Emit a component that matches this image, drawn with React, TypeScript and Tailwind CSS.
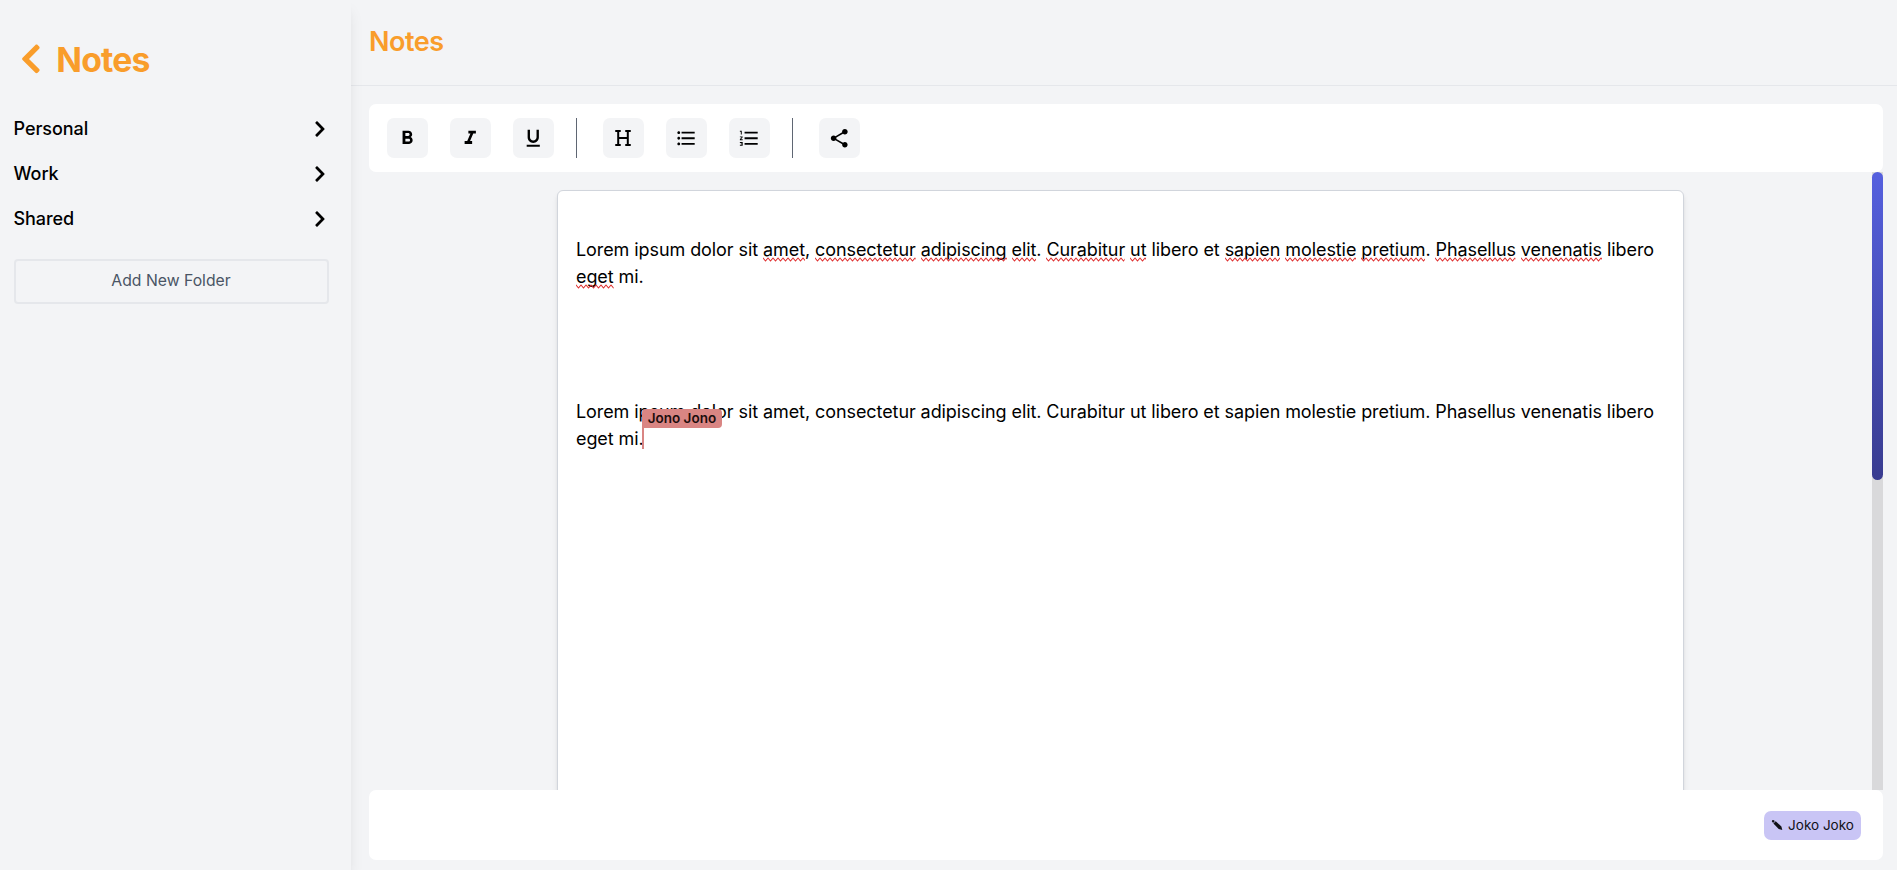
import type { ReactNode } from "react";
import { FaChevronLeft, FaChevronRight } from "react-icons/fa";
import {
  MdFormatBold,
  MdFormatItalic,
  MdFormatListBulleted,
  MdFormatListNumbered,
  MdFormatUnderlined,
  MdShare,
} from "react-icons/md";

const folders = ["Personal", "Work", "Shared"];

const sentence: { text: string; flagged?: boolean }[] = [
  { text: "Lorem ipsum dolor sit " },
  { text: "amet", flagged: true },
  { text: ", " },
  { text: "consectetur", flagged: true },
  { text: " " },
  { text: "adipiscing", flagged: true },
  { text: " " },
  { text: "elit", flagged: true },
  { text: ". " },
  { text: "Curabitur", flagged: true },
  { text: " " },
  { text: "ut", flagged: true },
  { text: " libero et " },
  { text: "sapien", flagged: true },
  { text: " " },
  { text: "molestie", flagged: true },
  { text: " " },
  { text: "pretium", flagged: true },
  { text: ". " },
  { text: "Phasellus", flagged: true },
  { text: " " },
  { text: "venenatis", flagged: true },
  { text: " libero " },
  { text: "eget", flagged: true },
  { text: " mi." },
];

function Squiggled({ children }: { children: ReactNode }) {
  return (
    <span className="relative inline-block">
      {children}
      <svg className="absolute top-[21px] left-0 h-[5px] w-full" aria-hidden="true">
        <defs>
          <pattern id="squiggle" width="5" height="5" patternUnits="userSpaceOnUse">
            <path
              d="M-2.5 4 0 1 2.5 4 5 1 7.5 4"
              fill="none"
              stroke="#de2a2a"
              strokeWidth="1.1"
              strokeLinejoin="round"
            />
          </pattern>
        </defs>
        <rect width="100%" height="5" fill="url(#squiggle)" />
      </svg>
    </span>
  );
}

function HeadingIcon() {
  return (
    <svg viewBox="0 0 16 16" className="mr-px h-4 w-4" fill="none" stroke="currentColor" strokeWidth="2" strokeLinecap="round">
      <path d="M1 1h4M11 1h4M1 15h4M11 15h4M3.2 1v14M12.8 1v14M3.2 8h9.6" />
    </svg>
  );
}

function ToolButton({ children, label }: { children: ReactNode; label: string }) {
  return (
    <button aria-label={label} className="flex h-10 w-[41px] items-center justify-center rounded-[7px] bg-gray-100 text-[22.5px] text-black">
      {children}
    </button>
  );
}

function Divider() {
  return <div className="h-10 w-px bg-[#5f6673]" />;
}

function Sidebar() {
  return (
    <aside className="z-10 flex w-[351px] shrink-0 flex-col bg-gray-100 pr-[22px] pl-[14px] shadow-lg">
      <div className="mt-[39px] flex h-10 items-center gap-[8.5px] text-[33.75px] text-[#f99d2b]">
        <FaChevronLeft />
        <h1 className="relative top-px leading-10 font-bold tracking-[-0.8px]">Notes</h1>
      </div>
      <nav className="mt-[27px] flex flex-col">
        {folders.map((name) => (
          <div key={name} className="flex h-[45px] items-center justify-between text-[18px] font-medium text-black">
            <span className="-ml-[0.5px] tracking-[-0.05px]">{name}</span>
            <FaChevronRight />
          </div>
        ))}
      </nav>
      <button className="mt-[18px] h-[45px] rounded-[4px] border-2 border-gray-200 pr-px pb-[2px] text-[15.75px] text-gray-600">
        Add New Folder
      </button>
    </aside>
  );
}

function Toolbar() {
  return (
    <div className="flex h-[68px] shrink-0 items-center gap-[22px] rounded-[7px] bg-white pl-[18px]">
      <ToolButton label="Bold"><MdFormatBold /></ToolButton>
      <ToolButton label="Italic"><MdFormatItalic /></ToolButton>
      <ToolButton label="Underline"><MdFormatUnderlined /></ToolButton>
      <Divider />
      <div className="ml-1 flex gap-[22px]">
        <ToolButton label="Heading"><HeadingIcon /></ToolButton>
        <ToolButton label="Bullet list"><MdFormatListBulleted /></ToolButton>
        <ToolButton label="Numbered list"><MdFormatListNumbered /></ToolButton>
      </div>
      <Divider />
      <div className="ml-1">
        <ToolButton label="Share"><MdShare /></ToolButton>
      </div>
    </div>
  );
}

function Editor() {
  return (
    <div className="flex min-h-0 flex-1">
      <div className="flex min-w-0 flex-1 justify-center overflow-hidden pt-[18px]">
        <div className="h-[1400px] w-[1127px] shrink-0 rounded-[6px] border border-gray-300 bg-white px-[18px] pt-[45px] text-[18px] leading-[27px] tracking-[-0.08px] text-black shadow-md">
          <p>
            {sentence.map((part, i) =>
              part.flagged ? <Squiggled key={i}>{part.text}</Squiggled> : <span key={i}>{part.text}</span>
            )}
          </p>
          <p className="mt-[108px]">
            {sentence.map((part) => part.text).join("")}
            <span className="relative">
              <span className="absolute top-0 -left-[2px] h-[21px] w-[2px] bg-[#d98583]" />
              <span className="absolute -top-[19px] -left-[2px] h-[19px] rounded-t-[4px] rounded-br-[4px] bg-[#d98583] px-[6px] text-[13.5px] leading-[19px] font-semibold tracking-normal whitespace-nowrap text-[#1c0d0d]">
                Jono Jono
              </span>
            </span>
          </p>
        </div>
      </div>
      <div className="w-[11px] shrink-0 bg-[#d9d9db]">
        <div className="h-[308px] rounded-full bg-linear-to-b from-[#5560df] to-[#393c90]" />
      </div>
    </div>
  );
}

function PencilIcon() {
  return (
    <svg viewBox="0 0 12 12" className="h-[12px] w-[12px]" fill="currentColor">
      <path d="M.8 2.3Q.8.9 2.3.9L3.9 2 2.1 4zM2.4 4.5 4.7 2.3 10.4 7.4 11.3 10.9 7.7 10z" />
    </svg>
  );
}

export default function App() {
  return (
    <div className="flex h-[870px] w-full overflow-hidden bg-gray-100 font-['Inter',sans-serif]">
      <Sidebar />
      <main className="flex min-w-0 flex-1 flex-col">
        <header className="h-[86px] shrink-0 border-b border-gray-200 pt-[24px] pl-[18px]">
          <h2 className="text-[27px] leading-9 font-semibold tracking-[-0.5px] text-[#f99d2b]">Notes</h2>
        </header>
        <div className="flex min-h-0 flex-1 flex-col pt-[18px] pr-[14px] pb-[10px] pl-[18px]">
          <Toolbar />
          <Editor />
          <footer className="flex h-[70px] shrink-0 items-center justify-end rounded-[7px] bg-white pr-[22px]">
            <div className="flex h-[29px] w-[97px] items-center justify-center gap-[5px] rounded-[7px] bg-[#c9c5f5] text-[13.5px] text-[#111118]">
              <PencilIcon />
              <span>Joko Joko</span>
            </div>
          </footer>
        </div>
      </main>
    </div>
  );
}
